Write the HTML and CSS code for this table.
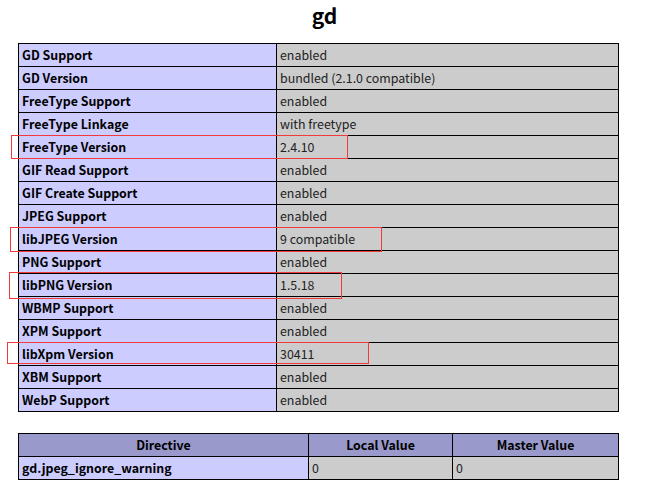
FILE: index.html
```html
<!DOCTYPE html>
<html>
<head>
<meta charset="utf-8">
<link rel="stylesheet" href="styles.css">
</head>
<body>
<div class="page">
<h1 class="title">gd</h1>
<table class="info">
<tr><td class="e">GD Support</td><td class="v">enabled</td></tr>
<tr><td class="e">GD Version</td><td class="v">bundled (2.1.0 compatible)</td></tr>
<tr><td class="e">FreeType Support</td><td class="v">enabled</td></tr>
<tr><td class="e">FreeType Linkage</td><td class="v">with freetype</td></tr>
<tr><td class="e">FreeType Version</td><td class="v">2.4.10</td></tr>
<tr><td class="e">GIF Read Support</td><td class="v">enabled</td></tr>
<tr><td class="e">GIF Create Support</td><td class="v">enabled</td></tr>
<tr><td class="e">JPEG Support</td><td class="v">enabled</td></tr>
<tr><td class="e">libJPEG Version</td><td class="v">9 compatible</td></tr>
<tr><td class="e">PNG Support</td><td class="v">enabled</td></tr>
<tr><td class="e">libPNG Version</td><td class="v">1.5.18</td></tr>
<tr><td class="e">WBMP Support</td><td class="v">enabled</td></tr>
<tr><td class="e">XPM Support</td><td class="v">enabled</td></tr>
<tr><td class="e">libXpm Version</td><td class="v">30411</td></tr>
<tr><td class="e">XBM Support</td><td class="v">enabled</td></tr>
<tr><td class="e">WebP Support</td><td class="v">enabled</td></tr>
</table>
<table class="info directives">
<tr class="h"><th class="c1">Directive</th><th class="c2">Local Value</th><th>Master Value</th></tr>
<tr><td class="e">gd.jpeg_ignore_warning</td><td class="v">0</td><td class="v">0</td></tr>
</table>
<div class="mark m1"></div>
<div class="mark m2"></div>
<div class="mark m3"></div>
<div class="mark m4"></div>
</div>
</body>
</html>
```
FILE: styles.css
```css
html, body {
  margin: 0;
  padding: 0;
  background: #fff;
}
body {
  font-family: "Noto Sans CJK SC", "Noto Sans", sans-serif;
  font-size: 12.4px;
  color: #222;
}
.page {
  position: relative;
  width: 649px;
  height: 492px;
  padding-top: 2px;
  box-sizing: border-box;
}
.title {
  margin: 0;
  height: 41px;
  line-height: 26px;
  text-align: center;
  font-size: 21px;
  font-weight: bold;
  color: #000;
}
.info {
  margin-left: 18px;
  width: 601px;
  border-collapse: collapse;
  table-layout: fixed;
}
.info td, .info th {
  border: 1px solid #000;
  height: 22px;
  padding: 0 3px;
  line-height: 20px;
  vertical-align: middle;
  white-space: nowrap;
  overflow: hidden;
}
.info td.e {
  width: 251px;
  background: #ccccff;
  font-weight: bold;
  color: #000;
}
.info td.v {
  background: #cccccc;
  color: #222;
}
.directives {
  margin-top: 21px;
}
.directives .h th {
  background: #9999cc;
  font-weight: bold;
  color: #000;
  text-align: center;
}
.directives th.c1 {
  width: 283px;
}
.directives th.c2 {
  width: 137px;
}
.mark {
  position: absolute;
  border: 1px solid #f23a3a;
}
.m1 { left: 11px; top: 135px; width: 335px; height: 22px; }
.m2 { left: 10px; top: 227px; width: 370px; height: 23px; }
.m3 { left: 9px; top: 272px; width: 331px; height: 25px; }
.m4 { left: 7px; top: 342px; width: 360px; height: 20px; }
```
